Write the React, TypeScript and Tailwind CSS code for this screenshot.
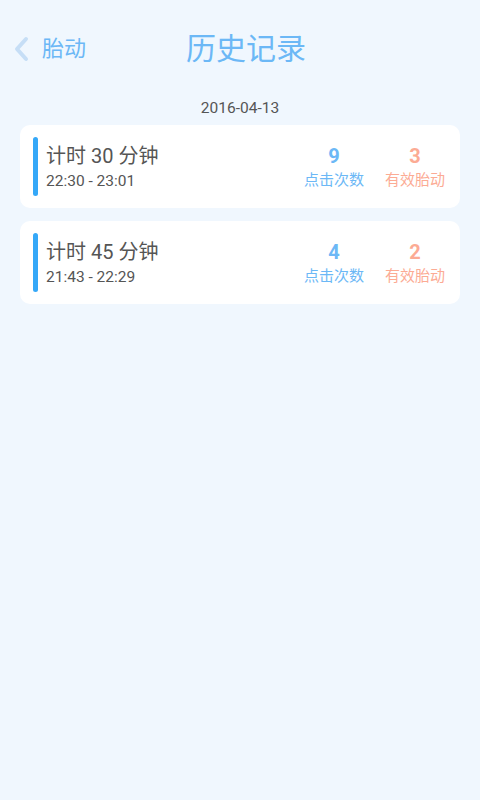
const records = [
  { minutes: 30, range: '22:30 - 23:01', clicks: 9, valid: 3 },
  { minutes: 45, range: '21:43 - 22:29', clicks: 4, valid: 2 },
];

const RecordCard = ({ minutes, range, clicks, valid }: (typeof records)[number]) => (
  <div className="flex h-[83px] items-center rounded-[10px] bg-white pl-[13px] pr-[14px]">
    <div className="h-[59px] w-[5px] rounded-full bg-[#35a8f8]" />
    <div className="ml-[8px] flex flex-1 flex-col">
      <span className="text-[20px] leading-[26px] text-[#555555]">计时 {minutes} 分钟</span>
      <span className="mt-[2px] text-[15.5px] leading-[20px] text-[#555555]">{range}</span>
    </div>
    <div className="flex w-[62px] flex-col items-center">
      <span className="text-[20px] font-bold leading-[26px] text-[#6cb8f6]">{clicks}</span>
      <span className="text-[15px] leading-[22px] text-[#6cb8f6]">点击次数</span>
    </div>
    <div className="ml-[19px] flex w-[62px] flex-col items-center">
      <span className="text-[20px] font-bold leading-[26px] text-[#fcab94]">{valid}</span>
      <span className="text-[15px] leading-[22px] text-[#fcab94]">有效胎动</span>
    </div>
  </div>
);

export default function App() {
  return (
    <div
      className="min-h-[800px] w-full bg-[#f0f7fe]"
      style={{ fontFamily: 'Roboto, "Noto Sans CJK SC", sans-serif' }}
    >
      {/* 顶部栏 */}
      <div className="relative flex h-[100px] items-center justify-center">
        <div className="absolute left-[12px] top-[36px] flex items-center">
          <svg width="18" height="26" viewBox="0 0 18 26" fill="none">
            <path d="M14 3 L5 13 L14 23" stroke="#c6def6" strokeWidth="4" strokeLinecap="round" strokeLinejoin="round" />
          </svg>
          <span className="ml-[12px] text-[22px] leading-[26px] text-[#6cb8f6]">胎动</span>
        </div>
        <span className="mt-[-2px] pl-[12px] text-[30px] leading-[40px] text-[#6cb8f6]">历史记录</span>
      </div>

      <div className="text-center text-[15.5px] leading-[16px] text-[#555555]">2016-04-13</div>

      <div className="mt-[9px] flex flex-col gap-[13px] px-[20px]">
        {records.map((r) => (
          <RecordCard key={r.range} {...r} />
        ))}
      </div>
    </div>
  );
}
